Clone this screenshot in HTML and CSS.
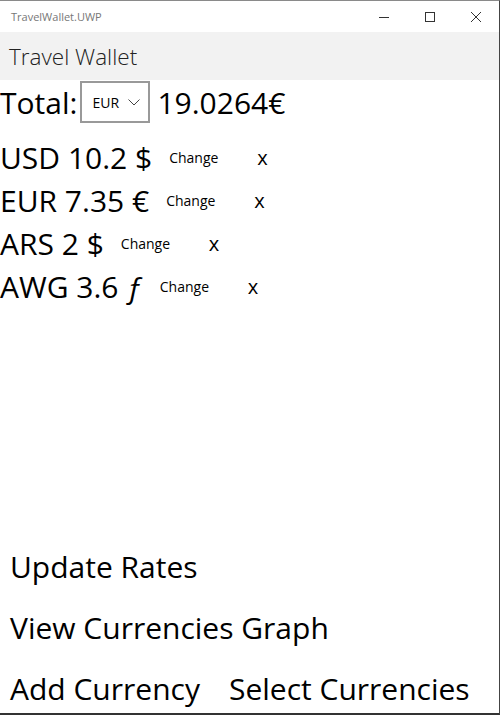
FILE: index.html
```html
<!DOCTYPE html>
<html lang="en">
<head>
    <meta charset="UTF-8">
    <meta name="viewport" content="width=device-width, initial-scale=1.0">
    <title>TravelWallet.UWP</title>
    <link rel="stylesheet" href="styles.css">
</head>
<body>
    <div class="window">
        <div class="titlebar">
            <span class="app-name">TravelWallet.UWP</span>
            <div class="caption-buttons">
                <span class="caption">
                    <svg width="10" height="10" viewBox="0 0 10 10"><path d="M0 5.5h10" stroke="#333" stroke-width="1"/></svg>
                </span>
                <span class="caption">
                    <svg width="10" height="10" viewBox="0 0 10 10"><rect x="0.5" y="0.5" width="9" height="9" fill="none" stroke="#333" stroke-width="1"/></svg>
                </span>
                <span class="caption">
                    <svg width="10" height="10" viewBox="0 0 10 10"><path d="M0 0L10 10M10 0L0 10" stroke="#333" stroke-width="1"/></svg>
                </span>
            </div>
        </div>

        <div class="appbar">Travel Wallet</div>

        <div class="content">
            <div class="total-row">
                <span class="big">Total:</span>
                <div class="combo">
                    <span>EUR</span>
                    <svg width="12" height="7" viewBox="0 0 12 7"><path d="M0.5 0.5L6 6L11.5 0.5" fill="none" stroke="#444" stroke-width="1"/></svg>
                </div>
                <span class="big">19.0264€</span>
            </div>

            <div class="wallet">
                <div class="wallet-row">
                    <span class="big">USD 10.2 $</span>
                    <button class="change">Change</button>
                    <button class="remove">x</button>
                </div>
                <div class="wallet-row">
                    <span class="big">EUR 7.35 €</span>
                    <button class="change">Change</button>
                    <button class="remove">x</button>
                </div>
                <div class="wallet-row">
                    <span class="big">ARS 2 $</span>
                    <button class="change">Change</button>
                    <button class="remove">x</button>
                </div>
                <div class="wallet-row">
                    <span class="big">AWG 3.6 <i>ƒ</i></span>
                    <button class="change">Change</button>
                    <button class="remove">x</button>
                </div>
            </div>
        </div>

        <div class="actions">
            <button class="action">Update Rates</button>
            <button class="action">View Currencies Graph</button>
            <div class="action-pair">
                <button class="action">Add Currency</button>
                <button class="action">Select Currencies</button>
            </div>
        </div>
    </div>
</body>
</html>
```

FILE: styles.css
```css
* { box-sizing: border-box; }
body { margin: 0; font-family: "Segoe UI", "Open Sans", "Noto Sans", sans-serif; color: #000; background: #fff; }
button { font-family: inherit; background: none; border: none; padding: 0; color: #000; cursor: pointer; }

.window { width: 500px; height: 715px; display: flex; flex-direction: column; border-top: 1px solid #8a8a8a; border-right: 1px solid #444; border-bottom: 2px solid #333; overflow: hidden; }

.titlebar { height: 31px; display: flex; align-items: center; justify-content: space-between; background: #fff; }
.app-name { font-size: 11px; color: #777; padding-left: 11px; }
.caption-buttons { display: flex; height: 100%; }
.caption { width: 46px; display: flex; align-items: center; justify-content: center; }

.appbar { height: 48px; background: #f2f2f2; font-size: 22.5px; color: #222; padding-left: 9px; display: flex; align-items: center; font-weight: 300; }

.content { flex: 1; }
.big { font-size: 30px; white-space: nowrap; }
.big i { font-style: italic; }

.total-row { display: flex; align-items: center; gap: 3px; height: 44px; }
.total-row .combo { margin-right: 4px; }
.combo { width: 70px; height: 42px; border: 2px solid #999; display: flex; align-items: center; justify-content: space-between; padding: 0 8px 0 10px; font-size: 14px; }

.wallet { margin-top: 12px; display: flex; flex-direction: column; }
.wallet-row { height: 43px; display: flex; align-items: center; }
.change { font-size: 14px; margin-left: 17px; width: 88px; text-align: left; }
.remove { font-size: 20px; }

.actions { display: flex; flex-direction: column; gap: 11px; }
.action { height: 50px; font-size: 30px; text-align: left; padding-left: 10px; white-space: nowrap; }
.action-pair { display: flex; gap: 19px; }
```
